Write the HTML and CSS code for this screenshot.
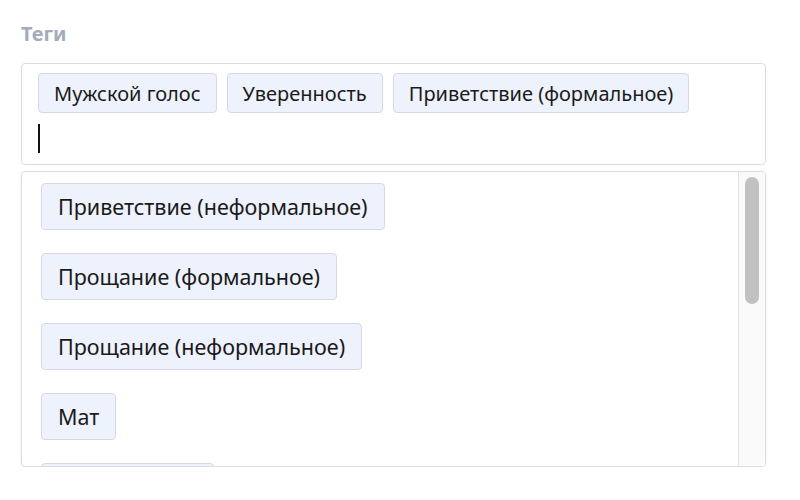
FILE: index.html
```html
<!DOCTYPE html>
<html lang="ru">
<head>
<meta charset="utf-8">
<link rel="stylesheet" href="styles.css">
</head>
<body>
<div class="field">
  <div class="label">Теги</div>
  <div class="input">
    <div class="chips">
      <span class="chip">Мужской голос</span>
      <span class="chip">Уверенность</span>
      <span class="chip">Приветствие (формальное)</span>
    </div>
    <div class="cursor"></div>
  </div>
  <div class="dropdown">
    <div class="list">
      <div class="option"><span class="chip big">Приветствие (неформальное)</span></div>
      <div class="option"><span class="chip big">Прощание (формальное)</span></div>
      <div class="option"><span class="chip big">Прощание (неформальное)</span></div>
      <div class="option"><span class="chip big">Мат</span></div>
      <div class="option"><span class="chip big partial"></span></div>
    </div>
    <div class="track"><div class="thumb"></div></div>
  </div>
</div>
</body>
</html>
```

FILE: styles.css
```css
html, body {
  margin: 0;
  padding: 0;
  background: #ffffff;
}
body {
  font-family: "Noto Sans", "Open Sans", sans-serif;
  color: #1a1a1a;
}
.field {
  padding: 21px 34px 0 21px;
}
.label {
  font-size: 20px;
  font-weight: 700;
  color: #a4abba;
  line-height: 26px;
  margin-bottom: 16px;
}
.input {
  border: 1px solid #dcdcdc;
  border-radius: 4px;
  padding: 9px 16px 11px 16px;
  height: 80px;
}
.chips {
  display: flex;
  gap: 10px;
}
.chip {
  display: inline-flex;
  align-items: center;
  box-sizing: border-box;
  height: 40px;
  padding: 0 15px;
  background: #eef2fc;
  border: 1px solid #d6d9e1;
  border-radius: 4px;
  font-size: 20px;
  color: #1a1a1a;
  white-space: nowrap;
}
.cursor {
  width: 2px;
  height: 29px;
  background: #111;
  margin-top: 11px;
}
.dropdown {
  margin-top: 6px;
  height: 294px;
  border: 1px solid #dcdcdc;
  border-radius: 4px;
  display: flex;
  overflow: hidden;
  box-shadow: 0 2px 4px rgba(0,0,0,0.05);
}
.list {
  flex: 1;
  overflow: hidden;
  padding: 11px 0 0 19px;
}
.option {
  height: 70px;
}
.chip.big {
  height: 47px;
  font-size: 21.5px;
  padding: 0 16px;
}
.chip.partial {
  width: 173px;
}
.track {
  width: 27px;
  background: #fafafa;
  border-left: 1px solid #e4e4e4;
  padding-top: 5px;
  box-sizing: border-box;
}
.thumb {
  width: 14px;
  height: 127px;
  margin-left: 6px;
  background: #c1c1c1;
  border-radius: 7px;
}
```
